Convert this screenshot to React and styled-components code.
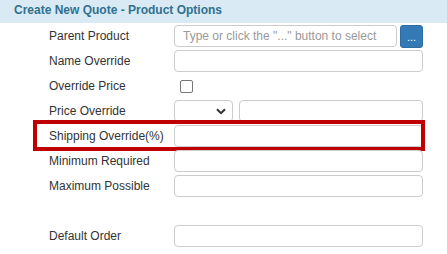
import React from 'react'
import styled, { createGlobalStyle } from 'styled-components'

const Global = createGlobalStyle`
  body {
    margin: 0;
    background: #fff;
    font-family: Arial, "Liberation Sans", sans-serif;
    font-size: 12px;
    color: #333;
  }
`

const Panel = styled.div`
  width: 447px;
  height: 254px;
  overflow: hidden;
`

const Header = styled.div`
  height: 23px;
  background: #d9eaf4;
  color: #31708f;
  font-weight: bold;
  font-size: 12px;
  padding-left: 14px;
  display: flex;
  align-items: center;
  padding-bottom: 3px;
  box-sizing: border-box;
`

const Form = styled.div`
  display: flex;
  flex-direction: column;
  gap: 3px;
  padding: 2px 0 0 49px;
`

const Row = styled.div`
  position: relative;
  display: flex;
  align-items: center;
  height: 22px;
  margin-top: ${p => (p.$spaced ? '25px' : '0')};
`

const Label = styled.label`
  width: 125px;
  flex: none;
  font-size: 12px;
  color: #333;
`

const Field = styled.div`
  display: flex;
  gap: ${p => p.$gap || 0}px;
  width: 249px;
  height: 22px;
`

const Input = styled.input`
  box-sizing: border-box;
  flex: 1;
  min-width: 0;
  height: ${p => p.$h || 22}px;
  border: 1px solid #ccc;
  border-radius: 4px;
  padding: 0 8px;
  font: 12px Arial, "Liberation Sans", sans-serif;
  color: #555;
  outline: none;
  &::placeholder {
    color: #999;
  }
`

const DotsButton = styled.button`
  box-sizing: border-box;
  width: 23px;
  height: 23px;
  margin-left: 3px;
  border: 1px solid #2e6da4;
  border-radius: 3px;
  background: #337ab7;
  color: #fff;
  font: 11px Arial, "Liberation Sans", sans-serif;
  padding: 0 0 4px;
  display: flex;
  align-items: flex-end;
  justify-content: center;
  flex: none;
`

const Check = styled.span`
  box-sizing: border-box;
  display: block;
  width: 13px;
  height: 13px;
  margin-left: 6px;
  border: 1px solid #767676;
  border-radius: 2px;
  background: #fff;
`

const SelectBox = styled.div`
  box-sizing: border-box;
  width: 59px;
  height: 22px;
  flex: none;
  border: 1px solid #ccc;
  border-radius: 4px;
  display: flex;
  align-items: center;
  justify-content: flex-end;
  padding-right: 6px;
`

const Highlight = styled.div`
  position: absolute;
  left: -16px;
  top: -5px;
  width: 392px;
  height: 31px;
  border: 4px solid #c00000;
  box-sizing: border-box;
  pointer-events: none;
`

const Chevron = () => (
  <svg width="10" height="7" viewBox="0 0 10 7">
    <path d="M1 1.2 L5 5.2 L9 1.2" fill="none" stroke="#333" strokeWidth="2" />
  </svg>
)

export default function App() {
  return (
    <Panel>
      <Global />
      <Header>Create New Quote - Product Options</Header>
      <Form>
        <Row>
          <Label>Parent Product</Label>
          <Field>
            <Input placeholder={'Type or click the "..." button to select'} />
            <DotsButton>...</DotsButton>
          </Field>
        </Row>
        <Row>
          <Label>Name Override</Label>
          <Field><Input /></Field>
        </Row>
        <Row>
          <Label>Override Price</Label>
          <Field style={{ alignItems: 'center' }}><Check /></Field>
        </Row>
        <Row>
          <Label>Price Override</Label>
          <Field $gap={6}>
            <SelectBox><Chevron /></SelectBox>
            <Input />
          </Field>
        </Row>
        <Row>
          <Label>Shipping Override(%)</Label>
          <Field><Input /></Field>
          <Highlight />
        </Row>
        <Row>
          <Label>Minimum Required</Label>
          <Field><Input /></Field>
        </Row>
        <Row>
          <Label>Maximum Possible</Label>
          <Field><Input /></Field>
        </Row>
        <Row $spaced>
          <Label>Default Order</Label>
          <Field><Input /></Field>
        </Row>
      </Form>
    </Panel>
  )
}
